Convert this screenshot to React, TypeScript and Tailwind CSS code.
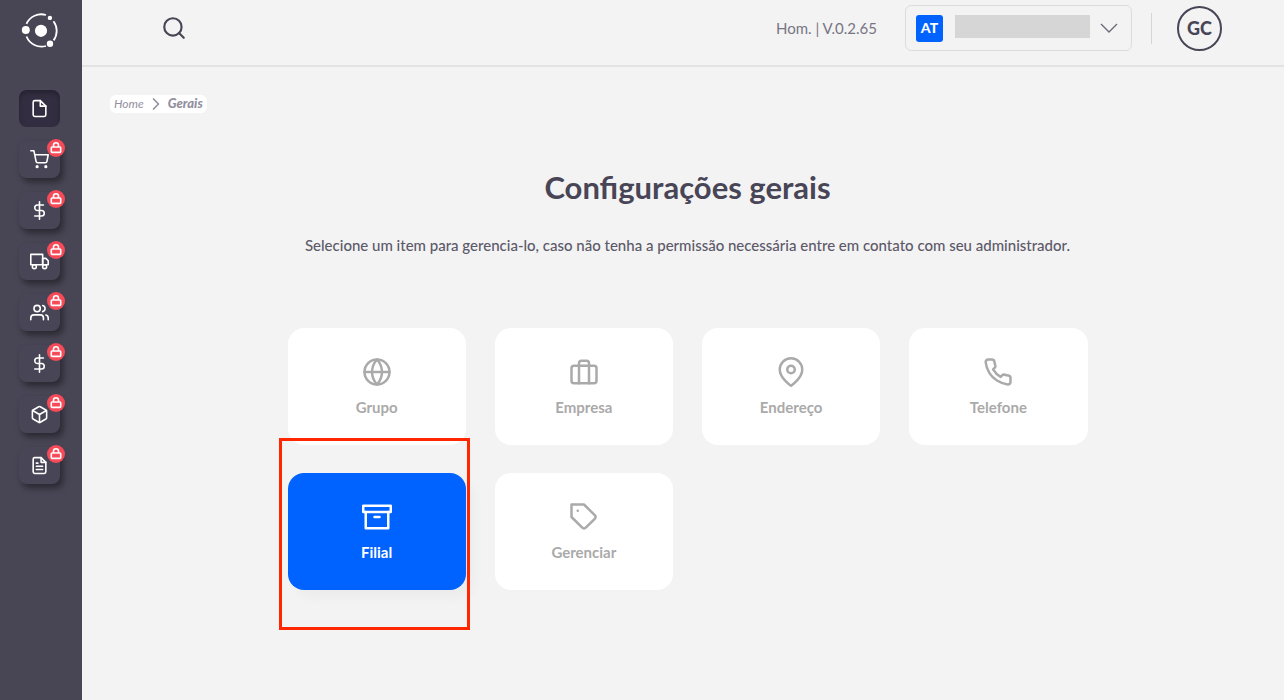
import React from "react";
import type { IconType } from "react-icons";
import {
  FiArchive,
  FiBox,
  FiBriefcase,
  FiChevronRight,
  FiDollarSign,
  FiFile,
  FiFileText,
  FiGlobe,
  FiMapPin,
  FiPhone,
  FiSearch,
  FiShoppingCart,
  FiTag,
  FiTruck,
  FiUsers,
} from "react-icons/fi";

const modules: { label: string; icon: IconType; locked: boolean }[] = [
  { label: "Cadastros", icon: FiFile, locked: false },
  { label: "Compras", icon: FiShoppingCart, locked: true },
  { label: "Vendas", icon: FiDollarSign, locked: true },
  { label: "Transporte", icon: FiTruck, locked: true },
  { label: "Pessoas", icon: FiUsers, locked: true },
  { label: "Financeiro", icon: FiDollarSign, locked: true },
  { label: "Estoque", icon: FiBox, locked: true },
  { label: "Fiscal", icon: FiFileText, locked: true },
];

function Logo() {
  return (
    <svg className="h-10 w-10" viewBox="0 0 40 40" fill="none" aria-hidden="true">
      <g stroke="#fff" strokeWidth="1.8">
        <path d="M5.5 13.8A16.2 16.2 0 0 1 25 5" />
        <path d="M32.5 11.2A16.2 16.2 0 0 1 32.6 30.4" />
        <path d="M25 36A16.2 16.2 0 0 1 5.5 26.5" />
      </g>
      <circle cx="20" cy="20.8" r="6.1" fill="#fff" />
      <circle cx="4.8" cy="20" r="4" fill="#fff" />
      <circle cx="28.9" cy="7.9" r="2.2" fill="#fff" />
      <circle cx="29" cy="33.8" r="3.2" fill="#fff" />
    </svg>
  );
}

function LockIcon() {
  return (
    <svg
      className="h-3.5 w-3.5"
      viewBox="0 0 14 14"
      fill="none"
      stroke="currentColor"
      strokeWidth="1.6"
      strokeLinejoin="round"
      aria-hidden="true"
    >
      <rect x="2.3" y="6" width="9.4" height="5.4" rx="0.8" />
      <path d="M4.5 6V4.2a2.5 2.5 0 0 1 5 0V6" />
    </svg>
  );
}

function Sidebar() {
  return (
    <aside className="flex w-[82px] shrink-0 flex-col items-center bg-[#484554] pt-2.5">
      <a href="#" aria-label="Início">
        <Logo />
      </a>
      <nav className="mt-10 flex flex-col gap-3.5 pr-[3px]">
        {modules.map(({ label, icon: Icon, locked }, i) => (
          <button
            key={i}
            type="button"
            aria-label={label}
            className={
              locked
                ? "relative flex h-[37px] w-[41px] items-center justify-center rounded-lg bg-[#484656] text-white shadow-[3px_4px_6px_rgba(0,0,0,0.42)]"
                : "relative flex h-[37px] w-[41px] items-center justify-center rounded-lg bg-[#322d40] text-white shadow-[inset_0_3px_5px_rgba(0,0,0,0.25)]"
            }
          >
            <Icon className="h-[19px] w-[19px]" strokeWidth={2} />
            {locked && (
              <span className="absolute -top-0.5 -right-[5px] flex h-[18px] w-[18px] items-center justify-center rounded-full bg-[#f74a58]">
                <LockIcon />
              </span>
            )}
          </button>
        ))}
      </nav>
    </aside>
  );
}

function Header() {
  return (
    <header className="flex h-[67px] items-center border-b-2 border-[#e3e3e3] pr-[62px] pb-[9px] pl-[79px] text-[#484556]">
      <button type="button" aria-label="Pesquisar">
        <FiSearch className="h-[26px] w-[26px]" strokeWidth={2} />
      </button>
      <span className="ml-auto text-[15px] text-[#777583]">Hom. | V.0.2.65</span>
      <button
        type="button"
        aria-label="Selecionar empresa"
        className="ml-7 flex h-[46px] w-[227px] items-center rounded-md border border-[#dcdcdd] px-2.5"
      >
        <span className="flex h-[27px] w-[27px] items-center justify-center rounded-[3px] bg-[#0062ff] text-sm font-black text-white">
          AT
        </span>
        <span className="mb-1 ml-3 h-[23px] w-[135px] bg-[#d6d6d6]" />
        <svg className="ml-2.5 h-3 w-[18px]" viewBox="0 0 18 12" fill="none" aria-hidden="true">
          <path d="M1 2l8 8 8-8" stroke="#6b6878" strokeWidth="1.3" />
        </svg>
      </button>
      <span className="ml-[19px] h-[31px] w-px bg-[#d5d5d7]" />
      <button
        type="button"
        aria-label="Perfil GC"
        className="ml-[25px] flex h-[45px] w-[45px] items-center justify-center rounded-full border-2 border-[#484556] text-lg font-black"
      >
        GC
      </button>
    </header>
  );
}

type CardProps = {
  label: string;
  icon: IconType;
  selected?: boolean;
};

function Card({ label, icon: Icon, selected }: CardProps) {
  return (
    <li className="relative">
      <button
        type="button"
        className={
          selected
            ? "flex h-[117px] w-full flex-col items-center justify-center gap-2.5 rounded-2xl bg-[#0062ff] text-white shadow-[8px_8px_12px_rgba(0,0,0,0.03)]"
            : "flex h-[117px] w-full flex-col items-center justify-center gap-2.5 rounded-2xl bg-white text-[#aaaaaa]"
        }
      >
        <Icon className="h-[30px] w-[30px]" />
        <span className="text-[15px] leading-5 font-bold">{label}</span>
      </button>
      {selected && (
        <span className="pointer-events-none absolute -top-[35px] -right-1 -bottom-10 -left-[9px] border-3 border-[#ff2600]" />
      )}
    </li>
  );
}

const cards: CardProps[] = [
  { label: "Grupo", icon: FiGlobe },
  { label: "Empresa", icon: FiBriefcase },
  { label: "Endereço", icon: FiMapPin },
  { label: "Telefone", icon: FiPhone },
  { label: "Filial", icon: FiArchive, selected: true },
  { label: "Gerenciar", icon: FiTag },
];

export default function App() {
  return (
    <div className="flex min-h-screen bg-[#f3f3f3] font-['Lato','Open_Sans',sans-serif] text-[#484556]">
      <Sidebar />
      <div className="min-w-0 flex-1">
        <Header />
        <main className="pt-7 pr-[19px] pl-7">
          <nav
            aria-label="Trilha"
            className="flex h-[18px] w-fit items-center gap-0.5 rounded-md bg-white px-1 text-xs text-[#9290a0] italic"
          >
            <a href="#">Home</a>
            <FiChevronRight className="h-5 w-5" />
            <a href="#" className="text-[13px] font-black">
              Gerais
            </a>
          </nav>
          <h1 className="mt-[54px] text-center text-[31px] leading-10 font-bold">Configurações gerais</h1>
          <p className="mt-7 text-center text-[15px] leading-5 font-medium text-[#5c5969]">
            Selecione um item para gerencia-lo, caso não tenha a permissão necessária entre em contato com seu
            administrador.
          </p>
          <ul className="mx-auto mt-[73px] grid max-w-[800px] grid-cols-4 gap-x-[29px] gap-y-7">
            {cards.map((card) => (
              <Card key={card.label} {...card} />
            ))}
          </ul>
        </main>
      </div>
    </div>
  );
}
